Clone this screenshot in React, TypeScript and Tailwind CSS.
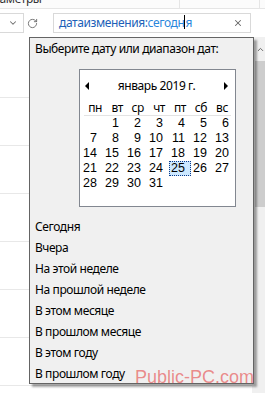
import { RotateCw, ChevronDown, ChevronUp, X } from "lucide-react";

const weekDays = ["пн", "вт", "ср", "чт", "пт", "сб", "вс"];

// January 2019 starts on Tuesday
const days: (number | null)[] = [null, ...Array.from({ length: 31 }, (_, i) => i + 1)];

const presets = [
  "Сегодня",
  "Вчера",
  "На этой неделе",
  "На прошлой неделе",
  "В этом месяце",
  "В прошлом месяце",
  "В этом году",
  "В прошлом году",
];

function Calendar() {
  const rows: (number | null)[][] = [];
  for (let i = 0; i < days.length; i += 7) rows.push(days.slice(i, i + 7));

  return (
    <div className="ml-[49px] mt-[12px] w-[157px] h-[138px] bg-white border border-[#828790]">
      <div className="mt-[8px] h-[16px] flex items-center justify-between pl-[5px] pr-[7px] leading-[16px]">
        <span className="w-0 h-0 border-y-[4px] border-y-transparent border-r-[4px] border-r-black" />
        <span className="text-black">январь 2019 г.</span>
        <span className="w-0 h-0 border-y-[4px] border-y-transparent border-l-[4px] border-l-black" />
      </div>
      <div className="mt-[6px] mx-[4px] grid grid-cols-7 h-[16px] border-b border-[#e3e3e3] leading-[15px]">
        {weekDays.map((d) => (
          <span key={d} className="text-right pr-[3px] -ml-[3px]">{d}</span>
        ))}
      </div>
      <div
        className="ml-[1px] grid grid-cols-[repeat(7,22px)] text-[12.5px] tracking-normal"
        style={{ fontFamily: '"Liberation Sans", Arial, sans-serif' }}
      >
        {rows.map((row, ri) =>
          Array.from({ length: 7 }, (_, ci) => {
            const d = row[ci];
            const selected = d === 25;
            return (
              <span
                key={`${ri}-${ci}`}
                className={
                  "h-[15px] text-right " +
                  (selected
                    ? "bg-[#cce8ff] border border-dotted border-[#0b3b8c] leading-[13px] pr-[5px]"
                    : "leading-[15px] pr-[6px]")
                }
              >
                {d ?? ""}
              </span>
            );
          })
        )}
      </div>
    </div>
  );
}

export default function App() {
  return (
    <div
      className="relative w-[265px] h-[393px] overflow-hidden bg-white text-[12px] text-black tracking-[-0.4px]"
      style={{ fontFamily: '"Noto Sans", "Open Sans", sans-serif' }}
    >
      {/* column header strip */}
      <div className="h-[9px] flex border-b border-[#e5e5e5] bg-[#fbfbfb] overflow-hidden">
        <div className="w-[180px] border-r border-[#e5e5e5] overflow-hidden">
          <span className="block -mt-[9px] -ml-[22px] text-[#333] leading-[16px]">Параметры</span>
        </div>
        <div className="w-[80px] border-r border-[#e5e5e5]" />
      </div>

      {/* address / search row */}
      <div className="h-[28px] flex items-start pt-[4px]">
        <div className="w-[24px] h-[20px] border border-l-0 border-[#d9d9d9] flex items-center justify-end pr-[5px]">
          <ChevronDown size={10} strokeWidth={2.5} className="text-[#6d6d6d]" />
        </div>
        <div className="w-[15px] h-[20px] flex items-center justify-center ml-[1px]">
          <RotateCw size={11} strokeWidth={2} className="text-[#6d6d6d]" />
        </div>
        <div className="ml-[13px] w-[198px] h-[20px] border border-[#d9d9d9] flex items-center pl-[5px] pr-[7px]">
          <span className="text-[#1c5fb8] leading-none">датаизменения:</span>
          <span className="text-[#2a86dc] leading-none">
            сегодн
            <span className="inline-block w-[1px] h-[14px] bg-black align-middle -mt-[2px]" />я
          </span>
          <X size={10} strokeWidth={2.5} className="ml-auto text-[#666]" />
        </div>
      </div>

      {/* list + scrollbar */}
      <div className="flex">
        <div className="flex-1">
          <div className="h-[60px]" />
          {Array.from({ length: 7 }, (_, i) => (
            <div key={i} className="h-[48px] border-t border-[#e8e8e8]" />
          ))}
        </div>
        <div className="w-[13px] bg-[#f0f0f0] h-[356px]">
          <div className="h-[24px] flex items-center justify-center pl-[3px]">
            <ChevronUp size={9} strokeWidth={2.5} className="text-[#606060]" />
          </div>
          <div className="ml-[3px] h-[146px] bg-[#cdcdcd]" />
        </div>
      </div>

      {/* date picker popup */}
      <div className="absolute left-[29px] top-[37px] w-[225px] h-[347px] bg-[#f0f0f0] border border-[#646464] shadow-[3px_3px_2px_rgba(0,0,0,0.35)]">
        <div className="pl-[5px] pt-[3px] leading-[16px]">Выберите дату или диапазон дат:</div>
        <Calendar />
        <div className="mt-[9px] pl-[5px]">
          {presets.map((p) => (
            <div key={p} className="h-[21px] leading-[21px]">
              {p}
            </div>
          ))}
        </div>
      </div>

      {/* watermark */}
      <div
        className="absolute left-[135px] top-[366px] text-[18px] leading-[22px] tracking-normal text-[rgba(230,80,80,0.65)]"
        style={{ fontFamily: '"Liberation Sans", Arial, sans-serif' }}
      >
        Public-PC.com
      </div>
    </div>
  );
}
